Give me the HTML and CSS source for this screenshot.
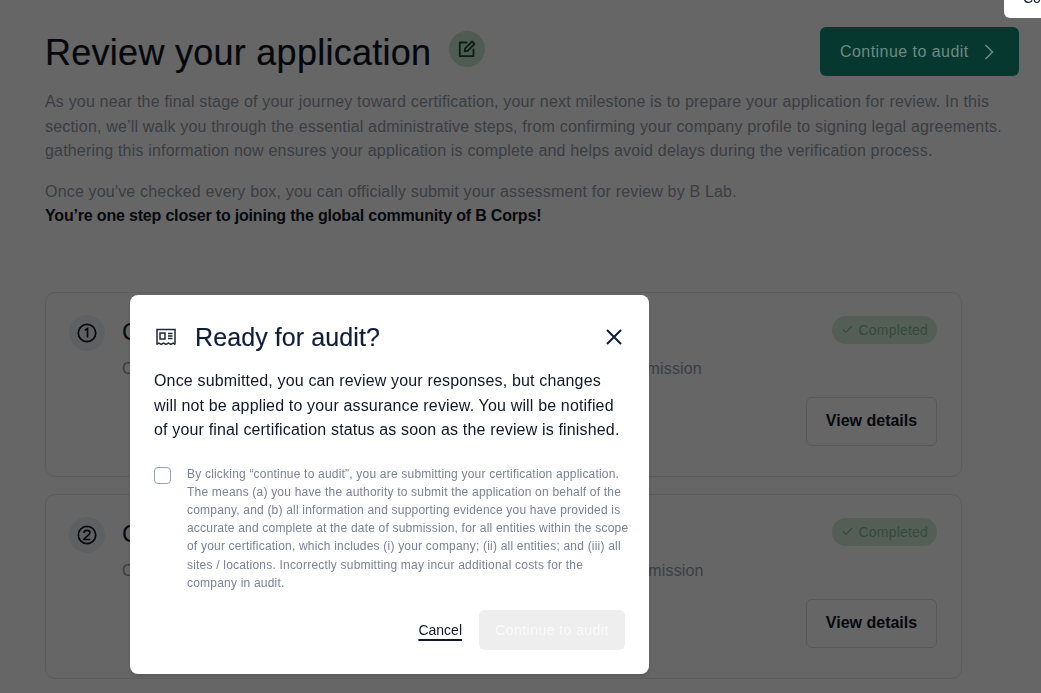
FILE: index.html
```html
<!DOCTYPE html>
<html lang="en">
<head>
    <meta charset="UTF-8">
    <meta name="viewport" content="width=device-width, initial-scale=1.0">
    <title>Review your application</title>
    <link rel="stylesheet" href="styles.css">
</head>
<body>
    <main class="page">
        <div class="page-head">
            <div class="title-row">
                <h1>Review your application</h1>
                <span class="edit-icon">
                    <svg width="20" height="20" viewBox="0 0 20 20" fill="none" stroke="currentColor" stroke-width="1.8" stroke-linejoin="round" stroke-linecap="round">
                        <path d="M9.5 3.5H2.8v13.700h13.700V10.500"/>
                        <path d="M7.600 12.400l.5-3L15 2.500l2.500 2.500-6.900 6.900z"/>
                    </svg>
                </span>
            </div>
            <button class="primary">Continue to audit
                <svg width="10" height="16" viewBox="0 0 10 16" fill="none" stroke="currentColor" stroke-width="1.6"><path d="M1.500 1l7 7-7 7"/></svg>
            </button>
        </div>

        <p class="intro">As you near the final stage of your journey toward certification, your next milestone is to prepare your application for review. In this section, we’ll walk you through the essential administrative steps, from confirming your company profile to signing legal agreements. gathering this information now ensures your application is complete and helps avoid delays during the verification process.</p>
        <p class="intro second">Once you've checked every box, you can officially submit your assessment for review by B Lab.<br><strong>You’re one step closer to joining the global community of B Corps!</strong></p>

        <section class="card">
            <span class="step-icon">
                <svg width="20" height="20" viewBox="0 0 20 20" fill="none" stroke="currentColor" stroke-width="1.7"><circle cx="10" cy="10" r="8.700"/><path d="M7.800 7.200l2.700-1.700v9"/></svg>
            </span>
            <div class="card-body">
                <div class="card-top">
                    <h2>Complete your company profile</h2>
                    <span class="badge">
                        <svg width="11" height="9" viewBox="0 0 11 9" fill="none" stroke="currentColor" stroke-width="1.200"><path d="M1 4.500l3 3 6-6.500"/></svg>
                        Completed
                    </span>
                </div>
                <p class="card-text">Check your company details are accurate and complete prior to final submission</p>
                <div class="card-foot"><button class="outline">View details</button></div>
            </div>
        </section>

        <section class="card">
            <span class="step-icon">
                <svg width="20" height="20" viewBox="0 0 20 20" fill="none" stroke="currentColor" stroke-width="1.7"><circle cx="10" cy="10" r="8.700"/><path d="M7 8c0-3.500 6-3.500 6 0 0 2-4.500 3.500-6 6.500h6.300"/></svg>
            </span>
            <div class="card-body">
                <div class="card-top">
                    <h2>Complete your legal agreements</h2>
                    <span class="badge">
                        <svg width="11" height="9" viewBox="0 0 11 9" fill="none" stroke="currentColor" stroke-width="1.200"><path d="M1 4.500l3 3 6-6.500"/></svg>
                        Completed
                    </span>
                </div>
                <p class="card-text">Check your legal agreements are signed and completed prior to final submission</p>
                <div class="card-foot"><button class="outline">View details</button></div>
            </div>
        </section>
    </main>

    <div class="overlay">
        <div class="modal">
            <div class="modal-head">
                <svg class="modal-icon" width="22" height="20" viewBox="0 0 22 20" fill="none" stroke="currentColor" stroke-width="1.500">
                    <path d="M2 16.800V2.500h18v14.300"/>
                    <path d="M1.500 17.500l2.300-1.300 2.400 1.300 2.400-1.300 2.400 1.300 2.400-1.300 2.400 1.300 2.400-1.300 2.300 1.300"/>
                    <rect x="5" y="6" width="5" height="6"/>
                    <path d="M13 6.500h4.500M13 9h4.500M13 11.500h4.500"/>
                </svg>
                <h3>Ready for audit?</h3>
                <svg class="close" width="18" height="18" viewBox="0 0 18 18" fill="none" stroke="currentColor" stroke-width="2"><path d="M2 2l14 14M16 2L2 16"/></svg>
            </div>
            <p class="modal-text">Once submitted, you can review your responses, but changes will not be applied to your assurance review. You will be notified of your final certification status as soon as the review is finished.</p>
            <label class="agree">
                <span class="box"></span>
                <span class="legal">By clicking “continue to audit”, you are submitting your certification application. The means (a) you have the authority to submit the application on behalf of the company, and (b) all information and supporting evidence you have provided is accurate and complete at the date of submission, for all entities within the scope of your certification, which includes (i) your company; (ii) all entities; and (iii) all sites / locations. Incorrectly submitting may incur additional costs for the company in audit.</span>
            </label>
            <div class="modal-foot">
                <a class="cancel" href="#">Cancel</a>
                <button class="disabled">Continue to audit</button>
            </div>
        </div>
    </div>

    <div class="tooltip">Copied</div>
</body>
</html>
```

FILE: styles.css
```css
* {
    box-sizing: border-box;
}
html, body {
    height: 100%;
    overflow: hidden;
}
body {
    margin: 0;
    background: white;
    font-family: "Liberation Sans", Arial, sans-serif;
    color: #101828;
}
button {
    font-family: inherit;
    border: none;
}

.page {
    padding: 27px 22px 0 45px;
}
.page-head {
    display: flex;
    justify-content: space-between;
    align-items: flex-start;
    height: 49px;
}
.title-row {
    display: flex;
    align-items: center;
    gap: 18px;
    height: 49px;
}
h1 {
    margin: 2px 0 0;
    font-size: 36px;
    font-weight: 400;
    letter-spacing: 0.27px;
    line-height: 49px;
    color: #0c1524;
    -webkit-text-stroke: 0.2px #0c1524;
}
.edit-icon {
    display: flex;
    align-items: center;
    justify-content: center;
    width: 36px;
    height: 36px;
    margin-top: -5px;
    border-radius: 50%;
    background: #c8e4d0;
    color: #14532d;
}
/* sits above the overlay, its colours are the dimmed ones */
.primary {
    position: relative;
    z-index: 2;
    display: flex;
    align-items: center;
    gap: 15px;
    width: 199px;
    height: 49px;
    padding: 0 0 0 20px;
    border-radius: 6px;
    background: #07382f;
    color: #6b8b83;
    font-size: 16px;
    letter-spacing: 0.45px;
}

.intro {
    margin: 14px 0 0;
    width: 974px;
    font-size: 16px;
    letter-spacing: 0.18px;
    line-height: 24.500px;
    color: #939aa8;
}
.intro.second {
    margin-top: 16px;
}
.intro strong {
    color: #101828;
    font-weight: 700;
    letter-spacing: -0.18px;
}

.card {
    display: flex;
    gap: 17px;
    width: 917px;
    height: 185px;
    padding: 22px 24px 0 23px;
    margin-bottom: 17px;
    border: 1px solid #e4e6ea;
    border-radius: 10px;
}
.card:first-of-type {
    margin-top: 63px;
}
.step-icon {
    display: flex;
    align-items: center;
    justify-content: center;
    flex: none;
    width: 36px;
    height: 36px;
    border-radius: 50%;
    background: #eef0f2;
}
.card-body {
    flex: 1;
}
.card-top {
    display: flex;
    justify-content: space-between;
    align-items: flex-start;
    height: 30px;
    margin-top: 2px;
}
h2 {
    margin: 0;
    font-size: 24px;
    font-weight: 400;
    line-height: 30px;
}
.badge {
    display: flex;
    align-items: center;
    gap: 5px;
    height: 28px;
    margin-top: -1px;
    padding: 0 9px 0 10px;
    border-radius: 14px;
    background: #d3ead9;
    color: #7dbb95;
    font-size: 14px;
    letter-spacing: 0.2px;
}
.card-text {
    margin: 10px 0 0;
    font-size: 16px;
    letter-spacing: 0.16px;
    line-height: 24px;
    color: #939aa8;
}
.card-foot {
    display: flex;
    justify-content: flex-end;
    margin-top: 16px;
}
.outline {
    width: 131px;
    height: 49px;
    background: white;
    border: 1px solid #d8dbe0;
    border-radius: 6px;
    font-size: 16px;
    font-weight: 700;
    color: #101828;
}

.overlay {
    position: fixed;
    inset: 0;
    display: flex;
    align-items: flex-start;
    padding: 295px 0 0 130px;
    background: rgba(0, 0, 0, 0.6);
}
.modal {
    width: 519px;
    height: 379px;
    padding: 25px 24px 0;
    background: white;
    border-radius: 8px;
    box-shadow: 0 2px 4px rgba(0, 0, 0, 0.15);
}
.modal-head {
    display: flex;
    align-items: center;
    height: 34px;
}
.modal-icon {
    flex: none;
    margin-left: 1px;
    color: #1d2939;
}
h3 {
    flex: 1;
    margin: 0 0 0 18px;
    font-size: 25px;
    font-weight: 400;
    letter-spacing: 0.1px;
    color: #101e35;
    -webkit-text-stroke: 0.15px #101e35;
}
.close {
    margin-right: 2px;
    color: #101e35;
}
.modal-text {
    margin: 15px 0 0;
    font-size: 16px;
    letter-spacing: 0.16px;
    line-height: 24.500px;
    color: #101828;
}
.agree {
    display: flex;
    gap: 16px;
    margin-top: 22px;
}
.box {
    flex: none;
    width: 17px;
    height: 17px;
    margin-top: 2px;
    border: 1px solid #98a2b3;
    border-radius: 4px;
}
.legal {
    margin-right: -4px;
    font-size: 12px;
    letter-spacing: 0.2px;
    line-height: 18.200px;
    color: #7a8296;
}
.modal-foot {
    display: flex;
    justify-content: flex-end;
    align-items: center;
    gap: 17px;
    margin-top: 18px;
}
.cancel {
    font-size: 14px;
    color: #101828;
    text-decoration: underline;
    text-decoration-thickness: 1.5px;
    text-underline-offset: 4px;
}
.disabled {
    width: 146px;
    height: 40px;
    border-radius: 6px;
    background: #eeeeee;
    color: #fafafa;
    font-size: 14px;
    letter-spacing: 0.45px;
}

.tooltip {
    position: fixed;
    top: -18px;
    left: 1004px;
    width: 60px;
    height: 36px;
    padding: 8px 0 0 19px;
    background: white;
    border-radius: 6px;
    font-size: 14px;
    color: #101828;
}
```
